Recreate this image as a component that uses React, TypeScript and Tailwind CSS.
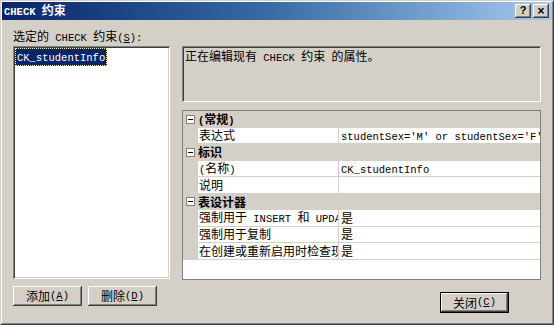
import React from 'react';

// Win2000-style bevels
const raised =
  'bg-[#d4d0c8] shadow-[inset_-1px_-1px_#404040,inset_1px_1px_#ffffff,inset_-2px_-2px_#808080,inset_2px_2px_#d4d0c8]';
const sunken =
  'shadow-[inset_1px_1px_#808080,inset_-1px_-1px_#ffffff,inset_2px_2px_#404040,inset_-2px_-2px_#d4d0c8]';

// CJK text in Noto, ASCII runs in a narrow mono so widths match SimSun
function T({ s }: { s: string }) {
  const parts = s.split(/([\x20-\x7e]+)/).filter((p) => p !== '');
  return (
    <span className="whitespace-pre">
      {parts.map((p, i) =>
        /^[\x20-\x7e]+$/.test(p) ? (
          <span key={i} className="font-['Liberation_Mono',monospace] text-[10.5px]">
            {p}
          </span>
        ) : (
          <span key={i}>{p}</span>
        )
      )}
    </span>
  );
}

function Key({ k }: { k: string }) {
  return (
    <span className="font-['Liberation_Mono',monospace] text-[10.5px]">
      (<span className="underline">{k}</span>)
    </span>
  );
}

function MinusBox() {
  return (
    <span className="flex h-[9px] w-[9px] items-center justify-center border border-[#808080] bg-white">
      <span className="h-px w-[5px] bg-black" />
    </span>
  );
}

function Category({ label }: { label: string }) {
  return (
    <div className="flex h-[16.5px] items-center bg-[#d4d0c8]">
      <div className="flex w-[15px] justify-center">
        <MinusBox />
      </div>
      <span className="font-bold">
        <T s={label} />
      </span>
    </div>
  );
}

function Prop({ name, value }: { name: string; value?: string }) {
  return (
    <div className="flex h-[16.5px]">
      <div className="w-[15px] shrink-0 bg-[#d4d0c8]" />
      <div className="flex w-[141px] shrink-0 items-center overflow-hidden whitespace-nowrap border-r border-b border-[#d4d0c8] bg-white pl-[1px]">
        <T s={name} />
      </div>
      <div className="flex min-w-0 flex-1 items-center overflow-hidden whitespace-nowrap border-b border-[#d4d0c8] bg-white pl-[2px]">
        {value && <T s={value} />}
      </div>
    </div>
  );
}

export default function App() {
  return (
    <div className="h-[325px] w-[554px] overflow-hidden font-['Noto_Sans_CJK_SC',sans-serif] text-[12px] leading-none text-black">
      <div className="flex h-full flex-col border border-t-[#d4d0c8] border-l-[#d4d0c8] border-r-[#404040] border-b-[#404040] bg-[#d4d0c8]">
        <div className="flex h-full flex-col border border-t-white border-l-white border-r-[#808080] border-b-[#808080]">
          {/* Title bar */}
          <div className="flex h-[18px] items-center justify-between bg-linear-to-r from-[#0a246a] via-[#3a6ea5] to-[#a6caf0] pl-[2px] pr-[3px]">
            <span className="font-bold text-white">
              <T s="CHECK 约束" />
            </span>
            <div className="flex gap-[2px]">
              <button className={`${raised} flex h-[14px] w-[16px] items-center justify-center pb-[1px] font-['Liberation_Sans',sans-serif] text-[11px] font-bold`}>
                ?
              </button>
              <button className={`${raised} flex h-[14px] w-[16px] items-center justify-center pb-[1px] font-['Liberation_Sans',sans-serif] text-[12px] font-bold`}>
                ×
              </button>
            </div>
          </div>

          {/* Body */}
          <div className="flex flex-1 pl-[11px]">
            {/* Left column */}
            <div className="flex w-[157px] flex-col">
              <div className="mt-[10px] h-[14px] whitespace-nowrap">
                <T s="选定的 CHECK 约束" />
                <Key k="S" />
                <T s=":" />
              </div>
              <div className={`${sunken} mt-[2px] h-[233px] bg-white p-[2px]`}>
                <div className="inline-block border border-dotted border-[#ffff80] bg-[#0a246a] px-[1px] py-[1px] text-white">
                  <T s="CK_studentInfo" />
                </div>
              </div>
              <div className="mt-[7px] flex gap-[6px]">
                <button className={`${raised} flex h-[20px] w-[69px] items-center justify-center`}>
                  <T s="添加" />
                  <Key k="A" />
                </button>
                <button className={`${raised} flex h-[20px] w-[69px] items-center justify-center`}>
                  <T s="删除" />
                  <Key k="D" />
                </button>
              </div>
            </div>

            {/* Right column */}
            <div className="ml-[12px] flex w-[359px] flex-col">
              <div className={`${sunken} mt-[26px] h-[56px] px-[3px] pt-[4px] whitespace-nowrap`}>
                <T s="正在编辑现有 CHECK 约束 的属性。" />
              </div>
              <div className="mt-[8px] flex h-[170px] flex-col border border-[#808080] bg-white">
                <Category label="(常规)" />
                <Prop name="表达式" value="studentSex='M' or studentSex='F'" />
                <Category label="标识" />
                <Prop name="(名称)" value="CK_studentInfo" />
                <Prop name="说明" />
                <Category label="表设计器" />
                <Prop name="强制用于 INSERT 和 UPDATE" value="是" />
                <Prop name="强制用于复制" value="是" />
                <Prop name="在创建或重新启用时检查现有数据" value="是" />
              </div>
              <div className="mt-[12px] flex justify-end pr-[32px]">
                <button className={`${raised} flex h-[21px] w-[69px] items-center justify-center border border-black`}>
                  <T s="关闭" />
                  <Key k="C" />
                </button>
              </div>
            </div>
          </div>
        </div>
      </div>
    </div>
  );
}
